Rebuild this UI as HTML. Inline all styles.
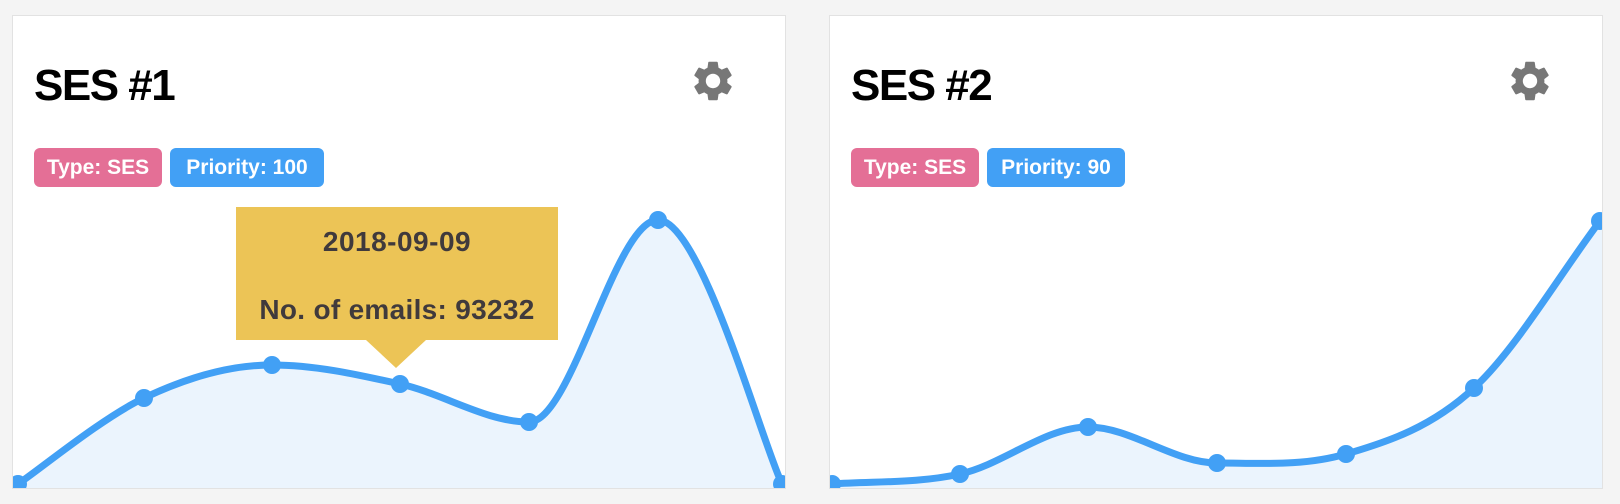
<!DOCTYPE html>
<html><head><meta charset="utf-8"><style>
html,body{margin:0;padding:0;background:#f4f4f4;width:1620px;height:504px;overflow:hidden;font-family:"Liberation Sans",Arial,sans-serif}
.card{position:absolute;top:15px;width:772px;height:472px;background:#fff;border:1px solid #e2e2e2;overflow:hidden}
.title{position:absolute;left:21px;top:40px;font-size:44px;font-weight:bold;color:#000;line-height:60px;letter-spacing:-1.5px}
.gear{position:absolute;top:41px;width:48px;height:48px}
.badge{position:absolute;top:132px;height:39px;line-height:39px;border-radius:6px;color:#fff;font-weight:bold;font-size:21px;padding:0 12px;box-sizing:border-box;text-align:center}
.pink{background:#e46f96}.blue{background:#42a0f5}
svg.chart{position:absolute;left:0;top:0}
.tip{position:absolute;left:236px;top:207px;width:322px;height:133px;background:#ecc456;color:#403a3c;font-weight:bold;font-size:28px;text-align:center}
.tip div{position:absolute;left:0;right:0}
.tri{position:absolute;left:366px;top:340px;width:0;height:0;border-left:30px solid transparent;border-right:30px solid transparent;border-top:28px solid #ecc456}
</style></head><body>

<div class="card" style="left:12px">
<svg class="chart" width="772" height="472" viewBox="12 15 772 472">
<path d="M17,483 C38,469 101,417 143,397 C185,377 228,364 271,364 C314,364 356,373.5 399,383 C442,392.5 485,421 528,421 C571,421 614,219 657,219 C700,219 760,439 781,483 L781,490 L17,490 Z" fill="#ebf4fd"/>
<path d="M17,483 C38,469 101,417 143,397 C185,377 228,364 271,364 C314,364 356,373.5 399,383 C442,392.5 485,421 528,421 C571,421 614,219 657,219 C700,219 760,439 781,483" fill="none" stroke="#42a0f5" stroke-width="7"/>
<g fill="#42a0f5"><circle cx="17" cy="483" r="9"/><circle cx="143" cy="397" r="9"/><circle cx="271" cy="364" r="9"/><circle cx="399" cy="383" r="9"/><circle cx="528" cy="421" r="9"/><circle cx="657" cy="219" r="9"/><circle cx="781" cy="483" r="9"/></g>
</svg>
<div class="title">SES #1</div>
<svg class="gear" style="left:676px" viewBox="0 0 24 24"><path fill="#777" d="M19.14 12.94c.04-.3.06-.61.06-.94 0-.32-.02-.64-.07-.94l2.03-1.58a.49.49 0 0 0 .12-.61l-1.92-3.32a.488.488 0 0 0-.59-.22l-2.39.96c-.5-.38-1.03-.7-1.62-.94l-.36-2.54a.484.484 0 0 0-.48-.41h-3.84c-.24 0-.43.17-.47.41l-.36 2.54c-.59.24-1.13.57-1.62.94l-2.39-.96c-.22-.08-.47 0-.59.22L2.74 8.87c-.12.21-.08.47.12.61l2.03 1.58c-.05.3-.09.63-.09.94s.02.64.07.94l-2.03 1.58a.49.49 0 0 0-.12.61l1.92 3.32c.12.22.37.29.59.22l2.39-.96c.5.38 1.03.7 1.62.94l.36 2.54c.05.24.24.41.48.41h3.84c.24 0 .44-.17.47-.41l.36-2.54c.59-.24 1.13-.56 1.62-.94l2.39.96c.22.08.47 0 .59-.22l1.92-3.32c.12-.22.07-.47-.12-.61l-2.01-1.58zM12 15.6c-1.98 0-3.6-1.62-3.6-3.6s1.62-3.6 3.6-3.6 3.6 1.62 3.6 3.6-1.62 3.6-3.6 3.6z"/></svg>
<div class="badge pink" style="left:21px;width:128px">Type: SES</div>
<div class="badge blue" style="left:157px;width:154px">Priority: 100</div>
</div>

<div class="card" style="left:829px">
<svg class="chart" width="772" height="472" viewBox="829 15 772 472">
<path d="M831,483 C874,480 916,482.5 959,473 C1002,463.5 1044,426 1087,426 C1130,426 1173,462 1216,462 C1259,462 1302,465.5 1345,453 C1388,440.5 1431,426 1473,387 C1515,348 1557,276 1599,220 L1605,220 L1605,490 L831,490 Z" fill="#ebf4fd"/>
<path d="M831,483 C874,480 916,482.5 959,473 C1002,463.5 1044,426 1087,426 C1130,426 1173,462 1216,462 C1259,462 1302,465.5 1345,453 C1388,440.5 1431,426 1473,387 C1515,348 1557,276 1599,220" fill="none" stroke="#42a0f5" stroke-width="7"/>
<g fill="#42a0f5"><circle cx="831" cy="483" r="9"/><circle cx="959" cy="473" r="9"/><circle cx="1087" cy="426" r="9"/><circle cx="1216" cy="462" r="9"/><circle cx="1345" cy="453" r="9"/><circle cx="1473" cy="387" r="9"/><circle cx="1599" cy="220" r="9"/></g>
</svg>
<div class="title">SES #2</div>
<svg class="gear" style="left:676px" viewBox="0 0 24 24"><path fill="#777" d="M19.14 12.94c.04-.3.06-.61.06-.94 0-.32-.02-.64-.07-.94l2.03-1.58a.49.49 0 0 0 .12-.61l-1.92-3.32a.488.488 0 0 0-.59-.22l-2.39.96c-.5-.38-1.03-.7-1.62-.94l-.36-2.54a.484.484 0 0 0-.48-.41h-3.84c-.24 0-.43.17-.47.41l-.36 2.54c-.59.24-1.13.57-1.62.94l-2.39-.96c-.22-.08-.47 0-.59.22L2.74 8.87c-.12.21-.08.47.12.61l2.03 1.58c-.05.3-.09.63-.09.94s.02.64.07.94l-2.03 1.58a.49.49 0 0 0-.12.61l1.92 3.32c.12.22.37.29.59.22l2.39-.96c.5.38 1.03.7 1.62.94l.36 2.54c.05.24.24.41.48.41h3.84c.24 0 .44-.17.47-.41l.36-2.54c.59-.24 1.13-.56 1.62-.94l2.39.96c.22.08.47 0 .59-.22l1.92-3.32c.12-.22.07-.47-.12-.61l-2.01-1.58zM12 15.6c-1.98 0-3.6-1.62-3.6-3.6s1.62-3.6 3.6-3.6 3.6 1.62 3.6 3.6-1.62 3.6-3.6 3.6z"/></svg>
<div class="badge pink" style="left:21px;width:128px">Type: SES</div>
<div class="badge blue" style="left:157px;width:138px">Priority: 90</div>
</div>

<div class="tip"><div style="top:19px;letter-spacing:0.5px">2018-09-09</div><div style="top:87px;letter-spacing:0.3px">No. of emails: 93232</div></div>
<div class="tri"></div>
</body></html>
